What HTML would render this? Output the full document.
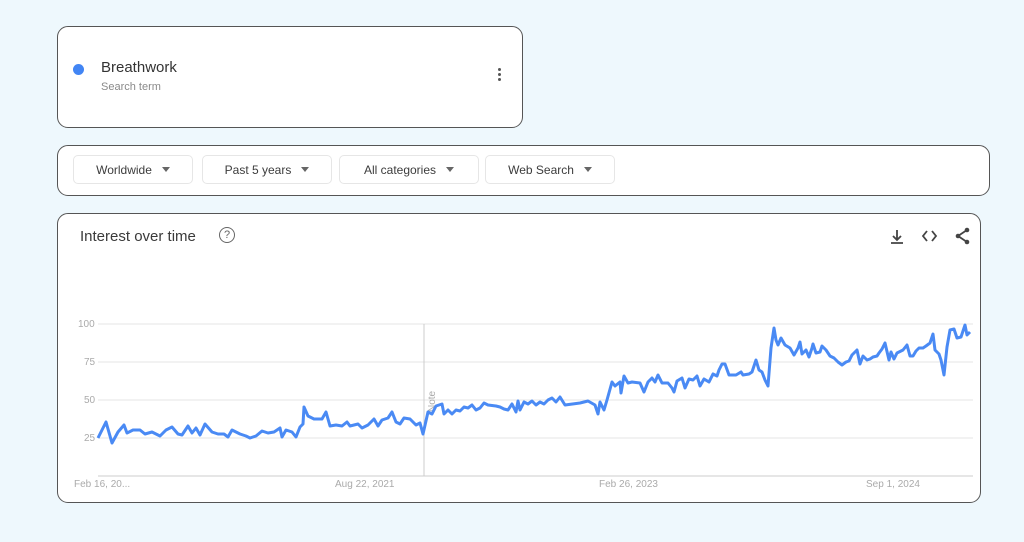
<!DOCTYPE html>
<html><head><meta charset="utf-8"><style>
body{margin:0;width:1024px;height:542px;background:#eef8fd;font-family:"Liberation Sans",Arial,sans-serif;position:relative;overflow:hidden}
.card{position:absolute;background:#fff;border:1.5px solid #555;border-radius:11px;box-sizing:border-box}
.chip{position:absolute;top:9px;height:29px;border:1px solid #e6e6e6;border-radius:5px;font-size:12px;color:#3c3c3c;display:flex;align-items:center;justify-content:center;box-sizing:border-box}
.chip:after{content:"";border-left:4px solid transparent;border-right:4px solid transparent;border-top:5px solid #666;margin-left:10px}
.lbl{position:absolute;font-size:10px;color:#aaa}
</style></head><body>
<div class="card" style="left:57px;top:26px;width:466px;height:102px">
 <div style="position:absolute;left:15px;top:37px;width:11px;height:11px;border-radius:50%;background:#4285f4"></div>
 <div style="position:absolute;left:43px;top:32px;font-size:15px;color:#333">Breathwork</div>
 <div style="position:absolute;left:43px;top:54px;font-size:11px;color:#8a8a8a">Search term</div>
 <div style="position:absolute;left:440px;top:41px;width:3px">
  <div style="width:3px;height:3px;border-radius:50%;background:#555;margin-bottom:2px"></div>
  <div style="width:3px;height:3px;border-radius:50%;background:#555;margin-bottom:2px"></div>
  <div style="width:3px;height:3px;border-radius:50%;background:#555"></div>
 </div>
</div>
<div class="card" style="left:57px;top:145px;width:933px;height:51px">
 <div class="chip" style="left:15px;width:120px">Worldwide</div>
 <div class="chip" style="left:144px;width:130px">Past 5 years</div>
 <div class="chip" style="left:281px;width:140px">All categories</div>
 <div class="chip" style="left:427px;width:130px">Web Search</div>
</div>
<div class="card" style="left:57px;top:213px;width:924px;height:290px"></div>
<div style="position:absolute;left:80px;top:228px;font-size:15px;color:#3a3a3a">Interest over time</div>
<div style="position:absolute;left:219px;top:227px;width:14px;height:14px;border:1.5px solid #666;border-radius:50%;font-size:11px;color:#666;text-align:center;line-height:14px">?</div>
<svg style="position:absolute;left:0;top:0" width="1024" height="542">
 <g stroke="#444" stroke-width="1.8" fill="none">
  <path d="M897 230v10M893 236l4 4 4-4M891 243h12"/>
  <path d="M927 231l-4 5 4 5M932 231l4 5-4 5"/>
  <path d="M967 230l-9 6 9 6"/>
 </g>
 <g fill="#444"><circle cx="967" cy="230" r="2.3"/><circle cx="958" cy="236" r="2.3"/><circle cx="967" cy="242" r="2.3"/></g>
 <g stroke="#e6e6e6" stroke-width="1">
  <path d="M98 324H973M98 362H973M98 400H973M98 438H973"/>
 </g>
 <path d="M98 476H973" stroke="#ccc" stroke-width="1"/>
 <path d="M424 324V476" stroke="#ccc" stroke-width="1"/>
 <text x="0" y="0" transform="translate(435,412) rotate(-90)" font-size="10" fill="#aaa" font-family="Liberation Sans">Note</text>
 <polyline fill="none" stroke="#4a8af4" stroke-width="3" stroke-linejoin="round" points="98,438 106,422 112,443 118,432 124,425 127,433 133,430 140,430 145,434 152,432 160,436 166,430 172,427 178,434 182,435 188,426 192,433 196,428 200,435 205,424 212,432 218,434 224,434 228,437 232,430 240,434 246,436 250,438 256,436 262,431 268,433 274,432 280,428 282,437 286,430 292,432 296,437 300,427 303,424 304,407 308,416 314,419 322,419 326,412 330,426 336,425 342,426 347,422 350,426 358,424 362,428 368,425 374,419 378,426 382,420 388,418 392,412 396,422 400,424 404,418 410,419 416,425 420,423 423,434 428,412 432,414 436,406 442,404 444,414 448,410 452,414 456,410 460,411 464,407 468,408 472,405 476,410 480,408 484,403 488,405 496,406 500,407 504,409 508,410 512,404 516,412 518,401 520,410 524,402 528,404 532,401 536,405 540,402 544,404 548,400 552,398 556,402 560,397 565,405 580,403 588,401 595,405 598,414 600,402 604,410 607,400 612,382 615,386 620,382 621,393 624,376 628,383 632,382 640,383 644,392 648,382 652,378 655,382 658,375 662,383 668,383 672,388 674,392 677,381 682,378 685,388 689,379 693,380 697,376 700,386 704,379 709,382 713,374 717,376 719,370 722,364 725,364 729,375 736,375 741,372 743,375 749,374 752,372 756,360 759,370 762,372 765,380 768,386 771,348 774,328 776,340 778,345 781,338 785,345 790,348 794,355 798,348 800,342 802,354 806,350 809,357 812,348 813,344 816,353 820,352 822,346 826,350 830,356 834,358 838,362 842,365 846,362 849,361 852,355 857,350 860,364 863,356 867,360 870,359 873,357 877,356 879,353 882,349 885,343 889,360 891,352 894,359 897,353 903,350 907,345 910,356 913,356 916,351 919,348 923,348 926,346 930,343 933,334 935,350 939,354 941,360 944,375 947,347 950,330 954,329 957,338 961,337 965,325 967,335 970,332"/>
</svg>
<div class="lbl" style="left:78px;top:319px">100</div>
<div class="lbl" style="left:84px;top:357px">75</div>
<div class="lbl" style="left:84px;top:395px">50</div>
<div class="lbl" style="left:84px;top:433px">25</div>
<div class="lbl" style="left:74px;top:479px">Feb 16, 20...</div>
<div class="lbl" style="left:335px;top:479px">Aug 22, 2021</div>
<div class="lbl" style="left:599px;top:479px">Feb 26, 2023</div>
<div class="lbl" style="left:866px;top:479px">Sep 1, 2024</div>
</body></html>
